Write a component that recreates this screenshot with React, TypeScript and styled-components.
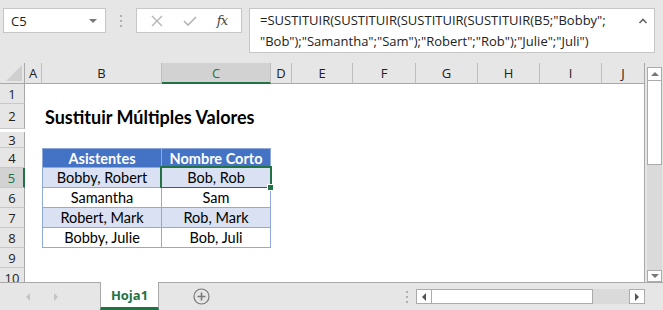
import styled, {createGlobalStyle, css} from "styled-components";

const GREEN = "#217346";
const COLS = "25px 17px 120px 109px 21px 61px 63px 62px 62px 62px 42px";
const LETTERS = ["A", "B", "C", "D", "E", "F", "G", "H", "I", "J"];

const Global = createGlobalStyle`
	html, body { margin: 0; padding: 0; }
	body { background: #e6e6e6; font-family: "Open Sans", "Noto Sans", sans-serif; }
`;

const Window = styled.div`
	width: 663px;
	height: 310px;
	background: #e6e6e6;
	display: flex;
	flex-direction: column;
	overflow: hidden;
`;

//formula bar
const FormulaArea = styled.div`
	height: 63px;
	display: flex;
	align-items: flex-start;
	padding: 8px 8px 0 3px;
	box-sizing: border-box;
`;
const NameBox = styled.div`
	width: 103px;
	height: 25px;
	box-sizing: border-box;
	background: #fff;
	border: 1px solid #c6c6c6;
	display: flex;
	align-items: center;
	justify-content: space-between;
	padding: 0 8px 0 7px;
	font-size: 13px;
	color: #222;
`;
const Caret = styled.span`
	width: 0;
	height: 0;
	border-left: 4px solid transparent;
	border-right: 4px solid transparent;
	border-top: 4px solid #777;
`;
const Dots = styled.div`
	width: 30px;
	height: 25px;
	display: flex;
	flex-direction: column;
	align-items: center;
	justify-content: center;
	gap: 3px;
	span {
		width: 2px;
		height: 2px;
		background: #b0b0b0;
	}
`;
const FxBox = styled.div`
	width: 106px;
	height: 25px;
	box-sizing: border-box;
	background: #fff;
	border: 1px solid #c6c6c6;
	display: flex;
	align-items: center;
	justify-content: space-around;
	padding: 0 4px;
`;
const Fx = styled.span`
	font-family: "DejaVu Serif", "Liberation Serif", serif;
	font-style: italic;
	font-size: 13px;
	color: #444;
	letter-spacing: -1px;
`;
const FormulaBox = styled.div`
	flex: 1;
	margin-left: 7px;
	height: 45px;
	box-sizing: border-box;
	background: #fff;
	border: 1px solid #c6c6c6;
	display: flex;
	justify-content: space-between;
	padding: 1px 6px 0 10px;
`;
const FormulaText = styled.div`
	font-size: 13px;
	line-height: 21px;
	color: #222;
	white-space: pre;
`;

//sheet
const SheetArea = styled.div`
	height: 219px;
	display: flex;
`;
const Grid = styled.div`
	width: 645px;
	border-right: 1px solid #a8a8a8;
	box-sizing: border-box;
	overflow: hidden;
	background: #fff;
`;
const Row = styled.div<{$h: number}>`
	display: grid;
	grid-template-columns: ${COLS};
	height: ${p => p.$h}px;
`;
const ColHead = styled.div<{$sel?: boolean}>`
	background: ${p => (p.$sel ? "#d2d2d2" : "#e6e6e6")};
	color: ${p => (p.$sel ? GREEN : "#222")};
	border-right: 1px solid #bdbdbd;
	border-bottom: ${p => (p.$sel ? `2px solid ${GREEN}` : "1px solid #a8a8a8")};
	box-sizing: border-box;
	font-size: 13px;
	display: flex;
	align-items: center;
	justify-content: center;
	&:last-child { border-right: none; }
`;
const Corner = styled.div`
	background: #e6e6e6;
	border-right: 1px solid #a8a8a8;
	border-bottom: 1px solid #a8a8a8;
	box-sizing: border-box;
	display: flex;
	align-items: flex-end;
	justify-content: flex-end;
	padding: 0 2px 2px 0;
`;
const CornerTri = styled.span`
	width: 0;
	height: 0;
	border-left: 16px solid transparent;
	border-bottom: 16px solid #cfcfcf;
`;
const RowHead = styled.div<{$sel?: boolean}>`
	background: ${p => (p.$sel ? "#d2d2d2" : "#e6e6e6")};
	color: ${p => (p.$sel ? GREEN : "#222")};
	border-right: ${p => (p.$sel ? `2px solid ${GREEN}` : "1px solid #a8a8a8")};
	border-bottom: 1px solid #c8c8c8;
	box-sizing: border-box;
	font-size: 13px;
	display: flex;
	align-items: center;
	justify-content: center;
	overflow: hidden;
`;
const Blank = styled.div``;
const Title = styled.div`
	grid-column: span 3;
	font-family: Lato, "Open Sans", sans-serif;
	font-weight: bold;
	font-size: 18px;
	color: #000;
	display: flex;
	align-items: center;
	padding-left: 3px;
	white-space: nowrap;
`;
const Cell = styled.div<{$kind: "head" | "band" | "plain"; $first?: boolean; $top?: boolean; $sel?: boolean}>`
	position: relative;
	box-sizing: border-box;
	font-family: Lato, "Open Sans", sans-serif;
	font-size: 14.5px;
	display: flex;
	align-items: center;
	justify-content: center;
	border-right: 1px solid #8eaadb;
	border-bottom: 1px solid #8eaadb;
	${p => p.$first && css`border-left: 1px solid #8eaadb;`}
	${p => p.$top && css`border-top: 1px solid #8eaadb;`}
	${p =>
		p.$kind === "head"
			? css`background: #4472c4; color: #fff; font-weight: bold;`
			: p.$kind === "band"
			? css`background: #d9e1f2; color: #000;`
			: css`background: #fff; color: #000;`}
	${p =>
		p.$sel &&
		css`
			&::after {
				content: "";
				position: absolute;
				left: -2px;
				top: -2px;
				right: -2px;
				bottom: -2px;
				border: 2px solid ${GREEN};
			}
			&::before {
				content: "";
				position: absolute;
				right: -4px;
				bottom: -4px;
				width: 5px;
				height: 5px;
				background: ${GREEN};
				border: 1px solid #fff;
				z-index: 2;
			}
		`}
`;

//vertical scrollbar
const VScroll = styled.div`
	width: 15px;
	margin-left: 2px;
	display: flex;
	flex-direction: column;
	padding-top: 4px;
	box-sizing: border-box;
`;
const ScrollBtn = styled.div<{$w?: number; $h?: number}>`
	width: ${p => p.$w ?? 15}px;
	height: ${p => p.$h ?? 14}px;
	box-sizing: border-box;
	background: #fff;
	border: 1px solid #ababab;
	display: flex;
	align-items: center;
	justify-content: center;
	flex-shrink: 0;
`;
const Tri = styled.span<{$dir: "up" | "down" | "left" | "right"; $c?: string}>`
	width: 0;
	height: 0;
	${p => {
		const c = p.$c ?? "#777";
		switch (p.$dir) {
			case "up":
				return css`border-left: 4px solid transparent; border-right: 4px solid transparent; border-bottom: 4px solid ${c};`;
			case "down":
				return css`border-left: 4px solid transparent; border-right: 4px solid transparent; border-top: 4px solid ${c};`;
			case "left":
				return css`border-top: 4px solid transparent; border-bottom: 4px solid transparent; border-right: 4px solid ${c};`;
			default:
				return css`border-top: 4px solid transparent; border-bottom: 4px solid transparent; border-left: 4px solid ${c};`;
		}
	}}
`;
const VThumb = styled.div`
	height: 84px;
	background: #fff;
	border: 1px solid #ababab;
	border-top: none;
	box-sizing: border-box;
`;
const VTrack = styled.div`
	flex: 1;
	background: #dadada;
`;

//tab bar
const TabBar = styled.div`
	height: 28px;
	border-top: 1px solid #a8a8a8;
	box-sizing: border-box;
	display: flex;
	align-items: center;
	position: relative;
`;
const NavArrows = styled.div`
	width: 100px;
	display: flex;
	align-items: center;
	gap: 24px;
	padding-left: 26px;
	box-sizing: border-box;
`;
const Tab = styled.div`
	width: 59px;
	align-self: stretch;
	margin-top: -1px;
	box-sizing: border-box;
	background: #fff;
	border-left: 1px solid #a8a8a8;
	border-right: 1px solid #a8a8a8;
	border-bottom: 3px solid ${GREEN};
	color: ${GREEN};
	font-family: "Open Sans", sans-serif;
	font-weight: bold;
	font-size: 13px;
	display: flex;
	align-items: center;
	justify-content: center;
	padding-top: 1px;
`;
const AddBtn = styled.div`
	margin-left: 34px;
	display: flex;
`;
const BarDots = styled(Dots)`
	margin-left: auto;
	width: 14px;
`;
const HScroll = styled.div`
	width: 229px;
	height: 15px;
	margin-left: 2px;
	margin-right: 18px;
	display: flex;
`;
const HThumb = styled.div`
	width: 161px;
	background: #fff;
	border: 1px solid #ababab;
	border-left: none;
	box-sizing: border-box;
`;
const HTrack = styled.div`
	flex: 1;
	background: #dadada;
`;

type Kind = "head" | "band" | "plain";
const tableRows: {n: number; b: string; c: string; kind: Kind}[] = [
	{n: 4, b: "Asistentes", c: "Nombre Corto", kind: "head"},
	{n: 5, b: "Bobby, Robert", c: "Bob, Rob", kind: "band"},
	{n: 6, b: "Samantha", c: "Sam", kind: "plain"},
	{n: 7, b: "Robert, Mark", c: "Rob, Mark", kind: "band"},
	{n: 8, b: "Bobby, Julie", c: "Bob, Juli", kind: "plain"},
];

function Empty({count}: {count: number}) {
	return (
		<>
			{Array.from({length: count}).map((_, i) => (
				<Blank key={i} />
			))}
		</>
	);
}

function App() {
	return (
		<Window>
			<Global />
			<FormulaArea>
				<NameBox>
					C5
					<Caret />
				</NameBox>
				<Dots>
					<span />
					<span />
					<span />
				</Dots>
				<FxBox>
					<svg width="12" height="12" viewBox="0 0 12 12">
						<path d="M1 1 L11 11 M11 1 L1 11" stroke="#b5b5b5" strokeWidth="1.4" fill="none" />
					</svg>
					<svg width="14" height="12" viewBox="0 0 14 12">
						<path d="M1 6 L5 10 L13 2" stroke="#b5b5b5" strokeWidth="1.6" fill="none" />
					</svg>
					<Fx>fx</Fx>
				</FxBox>
				<FormulaBox>
					<FormulaText>
						{'=SUSTITUIR(SUSTITUIR(SUSTITUIR(SUSTITUIR(B5;"Bobby";\n"Bob");"Samantha";"Sam");"Robert";"Rob");"Julie";"Juli")'}
					</FormulaText>
					<svg width="10" height="8" viewBox="0 0 10 8" style={{marginTop: 7}}>
						<path d="M1.5 6 L5 2.5 L8.5 6" stroke="#666" strokeWidth="1.6" fill="none" />
					</svg>
				</FormulaBox>
			</FormulaArea>
			<SheetArea>
				<Grid>
					<Row $h={21}>
						<Corner>
							<CornerTri />
						</Corner>
						{LETTERS.map(l => (
							<ColHead key={l} $sel={l === "C"}>
								{l}
							</ColHead>
						))}
					</Row>
					<Row $h={20}>
						<RowHead>1</RowHead>
						<Empty count={10} />
					</Row>
					<Row $h={28}>
						<RowHead>2</RowHead>
						<Blank />
						<Title>Sustituir Múltiples Valores</Title>
						<Empty count={7} />
					</Row>
					<Row $h={16}>
						<RowHead>3</RowHead>
						<Empty count={10} />
					</Row>
					{tableRows.map(r => (
						<Row key={r.n} $h={20}>
							<RowHead $sel={r.n === 5}>{r.n}</RowHead>
							<Blank />
							<Cell $kind={r.kind} $first $top={r.n === 4}>
								{r.b}
							</Cell>
							<Cell $kind={r.kind} $top={r.n === 4} $sel={r.n === 5}>
								{r.c}
							</Cell>
							<Empty count={7} />
						</Row>
					))}
					{[9, 10].map(n => (
						<Row key={n} $h={20}>
							<RowHead>{n}</RowHead>
							<Empty count={10} />
						</Row>
					))}
				</Grid>
				<VScroll>
					<ScrollBtn $h={14}>
						<Tri $dir="up" />
					</ScrollBtn>
					<VThumb />
					<VTrack />
					<ScrollBtn $h={12}>
						<Tri $dir="down" />
					</ScrollBtn>
				</VScroll>
			</SheetArea>
			<TabBar>
				<NavArrows>
					<Tri $dir="left" $c="#c4c4c4" />
					<Tri $dir="right" $c="#c4c4c4" />
				</NavArrows>
				<Tab>Hoja1</Tab>
				<AddBtn>
					<svg width="17" height="17" viewBox="0 0 17 17">
						<circle cx="8.5" cy="8.5" r="7.5" stroke="#7a7a7a" strokeWidth="1.2" fill="none" />
						<path d="M8.5 4.5 V12.5 M4.5 8.5 H12.5" stroke="#7a7a7a" strokeWidth="1.6" />
					</svg>
				</AddBtn>
				<BarDots>
					<span />
					<span />
					<span />
				</BarDots>
				<HScroll>
					<ScrollBtn $w={16} $h={15}>
						<Tri $dir="left" $c="#555" />
					</ScrollBtn>
					<HThumb />
					<HTrack />
					<ScrollBtn $w={16} $h={15}>
						<Tri $dir="right" $c="#555" />
					</ScrollBtn>
				</HScroll>
			</TabBar>
		</Window>
	);
}
export default App;
